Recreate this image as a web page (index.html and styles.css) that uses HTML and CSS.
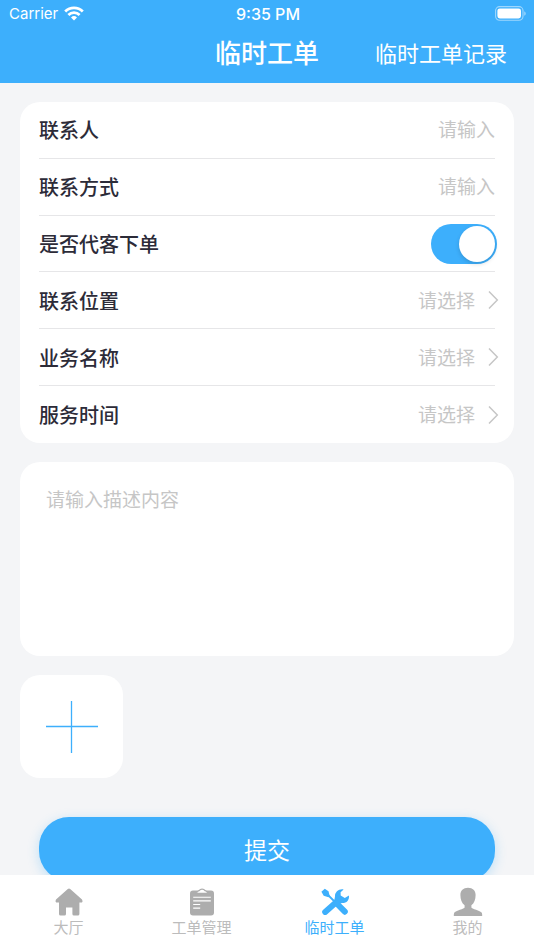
FILE: index.html
```html
<!DOCTYPE html>
<html lang="zh-CN">
<head>
<meta charset="utf-8">
<meta name="viewport" content="width=device-width, initial-scale=1">
<title>临时工单</title>
<link rel="stylesheet" href="styles.css">
</head>
<body>
<div class="app">
  <header class="header">
    <div class="status">
      <div class="carrier">
        <span>Carrier</span>
        <svg width="20" height="15" viewBox="0 0 20 15" fill="none" stroke="currentColor" stroke-width="2.8" aria-hidden="true">
          <path d="M1.2 5.4a12.6 12.6 0 0 1 17.6 0"/>
          <path d="M4.4 8.9a8 8 0 0 1 11.2 0"/>
          <path d="M10 14.6 7 11.5a4.4 4.4 0 0 1 6 0z" fill="currentColor" stroke="none"/>
        </svg>
      </div>
      <span class="clock">9:35 PM</span>
      <svg class="battery" width="32" height="15" viewBox="0 0 32 15" aria-hidden="true">
        <rect x=".6" y=".6" width="27.4" height="13.6" rx="4" fill="none" stroke="currentColor" stroke-opacity=".5" stroke-width="1.1"/>
        <rect x="2.4" y="2.4" width="23.6" height="10" rx="2.4" fill="currentColor"/>
        <path d="M29.4 5.2c1.6.8 1.6 3.8 0 4.6z" fill="currentColor" fill-opacity=".6"/>
      </svg>
    </div>
    <div class="navbar">
      <h1 class="title">临时工单</h1>
      <a class="records" href="#records">临时工单记录</a>
    </div>
  </header>

  <main class="content">
    <form class="form">
      <div class="card fields">
        <div class="row">
          <label class="label" for="contact">联系人</label>
          <input class="control" id="contact" type="text" placeholder="请输入">
        </div>
        <div class="row">
          <label class="label" for="phone">联系方式</label>
          <input class="control" id="phone" type="tel" placeholder="请输入">
        </div>
        <div class="row">
          <label class="label" for="proxy">是否代客下单</label>
          <input class="switch" id="proxy" type="checkbox" role="switch" checked>
        </div>
        <div class="row">
          <label class="label" for="place">联系位置</label>
          <select class="control" id="place"><option value="">请选择</option></select>
          <svg class="chevron" width="12" height="20" viewBox="0 0 12 20" aria-hidden="true"><path d="M2 1.5 10.3 10 2 18.5"/></svg>
        </div>
        <div class="row">
          <label class="label" for="business">业务名称</label>
          <select class="control" id="business"><option value="">请选择</option></select>
          <svg class="chevron" width="12" height="20" viewBox="0 0 12 20" aria-hidden="true"><path d="M2 1.5 10.3 10 2 18.5"/></svg>
        </div>
        <div class="row">
          <label class="label" for="time">服务时间</label>
          <select class="control" id="time"><option value="">请选择</option></select>
          <svg class="chevron" width="12" height="20" viewBox="0 0 12 20" aria-hidden="true"><path d="M2 1.5 10.3 10 2 18.5"/></svg>
        </div>
      </div>

      <textarea class="card description" aria-label="描述内容" placeholder="请输入描述内容"></textarea>

      <button class="card add" type="button" aria-label="添加图片">
        <svg width="52" height="52" viewBox="0 0 52 52" aria-hidden="true"><path d="M25.500 0v52M0 25.500h52" stroke="currentColor" stroke-width="1.3"/></svg>
      </button>

      <button class="submit" type="submit">提交</button>
    </form>
  </main>

  <nav class="tabs">
    <a class="tab" href="#hall">
      <svg width="30" height="30" viewBox="0 0 30 30" aria-hidden="true"><path fill="currentColor" d="M13.8 1.9Q15 .9 16.2 1.9L28 12.400Q29.200 14.200 28 15.600H25.400V27Q25.400 28.600 23.800 28.600H20Q18.400 28.600 18.400 27V20.400H12V27Q12 28.600 10.400 28.600H6.600Q5 28.600 5 27V15.600H2.200Q.8 14.200 2 12.400Z"/></svg>
      <span>大厅</span>
    </a>
    <a class="tab" href="#orders">
      <svg width="30" height="30" viewBox="0 0 30 30" aria-hidden="true">
        <rect x="3" y="3.600" width="24" height="25" rx="3" fill="currentColor"/>
        <path d="M9.400 6.400c0-2 2-2.400 3-3 .8-1.800 4.600-1.800 5.400 0 1 .6 3 1 3 3z" fill="#fff" stroke="currentColor" stroke-width="1.3"/>
        <path d="M6.200 10.200h17.600M6.200 13.900h17.600M6.200 17.500h7M6.200 21.100h7" stroke="#fff" stroke-width="1.1"/>
      </svg>
      <span>工单管理</span>
    </a>
    <a class="tab active" href="#temporary" aria-current="page">
      <svg width="30" height="30" viewBox="0 0 30 30" aria-hidden="true">
        <path d="M5.200 24.900 19 12.800" stroke="currentColor" stroke-width="6" stroke-linecap="round"/>
        <path fill="currentColor" d="M23.600 2.400C19 1.400 14.800 5 15 9.200L14.400 13l4 4 3.600-.9c4.600.2 7.600-3.300 6.900-7.700L24.800 11 20.700 8.400 20.600 5.200z"/>
        <path d="m9 9 4 4" stroke="#fff" stroke-width="2.800"/>
        <path d="m6 6 10 10" stroke="currentColor" stroke-width="1.800"/>
        <path fill="currentColor" d="m1.400 4.800 3.400-3 3.700 2.400 1.200 4.900-1.200 1.100-4.800-1.500z"/>
        <path d="m17.200 17 7.600 7.700" stroke="currentColor" stroke-width="6" stroke-linecap="round"/>
      </svg>
      <span>临时工单</span>
    </a>
    <a class="tab" href="#me">
      <svg width="30" height="30" viewBox="0 0 30 30" aria-hidden="true"><path fill="currentColor" d="M15 .8c4.800 0 7.600 2.900 7.600 7.200 0 4.600-1.400 8.200-4.200 10.200v2.200c0 1.400 9 2.900 10.400 5.400.4.900.4 2 .4 3.200H.8c0-1.200 0-2.300.4-3.200 1.400-2.500 10.400-4 10.400-5.400v-2.200C8.800 16.200 7.400 12.600 7.400 8c0-4.300 2.800-7.200 7.600-7.200z"/></svg>
      <span>我的</span>
    </a>
  </nav>
</div>
</body>
</html>
```
FILE: styles.css
```css
:root {
  --blue: #3daffc;
  --page: #f4f5f7;
  --ink: #2c2b38;
  --muted: #c6c6c6;
  --line: #e6e6e8;
}

* {
  box-sizing: border-box;
}

body {
  margin: 0;
  background: var(--page);
  color: var(--ink);
  font-family: Inter, "Noto Sans CJK SC", sans-serif;
}

input,
select,
textarea,
button {
  margin: 0;
  padding: 0;
  border: 0;
  background: none;
  font: inherit;
}

a {
  color: inherit;
  text-decoration: none;
}

.app {
  display: flex;
  flex-direction: column;
  height: 100vh;
}

/* Header */

.header {
  flex: none;
  background: var(--blue);
  color: #fff;
}

.status {
  display: grid;
  grid-template-columns: 1fr auto 1fr;
  align-items: center;
  height: 27px;
  padding: 0 7px 0 9px;
  font-size: 15px;
}

.carrier {
  display: flex;
  align-items: center;
  gap: 6px;
}

.clock {
  font-size: 16px;
  font-weight: 500;
}

.battery {
  justify-self: end;
}

.navbar {
  display: grid;
  grid-template-columns: 1fr auto 1fr;
  height: 56px;
  padding: 0 27px;
  line-height: 54px;
}

.title {
  grid-column: 2;
  margin: 0;
  font-size: 26px;
  font-weight: 500;
}

.records {
  justify-self: end;
  font-size: 22px;
  white-space: nowrap;
}

/* Form */

.content {
  flex: 1;
  min-height: 0;
  overflow-y: auto;
  scrollbar-width: none;
}

.form {
  display: flex;
  flex-direction: column;
  gap: 19px;
  padding: 19px 20px;
}

.card {
  border-radius: 20px;
  background: #fff;
}

.fields {
  display: grid;
  grid-auto-rows: 1fr;
  min-height: 341px;
  padding: 0 19px;
}

.row {
  display: flex;
  align-items: center;
  border-bottom: 1px solid var(--line);
}

.row:last-child {
  border-bottom: 0;
}

.label {
  flex: none;
  font-size: 20px;
  font-weight: 500;
}

.control {
  flex: 1;
  min-width: 0;
  height: 40px;
  padding-top: 2px;
  outline: 0;
  appearance: none;
  color: var(--muted);
  font-size: 19px;
  text-align: right;
  text-align-last: right;
}

.control::placeholder,
.description::placeholder {
  color: var(--muted);
  opacity: 1;
}

.chevron {
  flex: none;
  margin: 0 -4px 0 12px;
  fill: none;
  stroke: var(--muted);
  stroke-width: 1.5;
}

.switch {
  display: flex;
  width: 66px;
  height: 40px;
  margin: 0 -2px 0 auto;
  padding: 2px;
  appearance: none;
  border-radius: 20px;
  background: var(--line);
}

.switch::before {
  content: "";
  width: 36px;
  height: 36px;
  border-radius: 50%;
  background: #fff;
  box-shadow: 0 2px 4px rgba(0, 0, 0, 0.15);
}

.switch:checked {
  justify-content: flex-end;
  background: var(--blue);
}

.description {
  display: block;
  height: 194px;
  padding: 23px 26px;
  outline: 0;
  resize: none;
  color: var(--ink);
  font-size: 19px;
}

.add {
  display: grid;
  place-items: center;
  width: 103px;
  height: 103px;
  color: var(--blue);
}

.submit {
  height: 64px;
  margin: 20px 19px;
  border-radius: 30px;
  background: var(--blue);
  box-shadow: 0 3px 12px rgba(61, 175, 252, 0.3);
  color: #fff;
  font-size: 23px;
}

/* Tab bar */

.tabs {
  display: grid;
  flex: none;
  grid-template-columns: repeat(4, 1fr);
  height: 75px;
  padding: 12px 0 0 2px;
  background: #fff;
}

.tab {
  display: flex;
  flex-direction: column;
  align-items: center;
  color: #adadad;
}

.tab span {
  color: #bcbcbc;
  font-size: 15px;
  line-height: 22px;
}

.tab.active,
.tab.active span {
  color: var(--blue);
}
```
